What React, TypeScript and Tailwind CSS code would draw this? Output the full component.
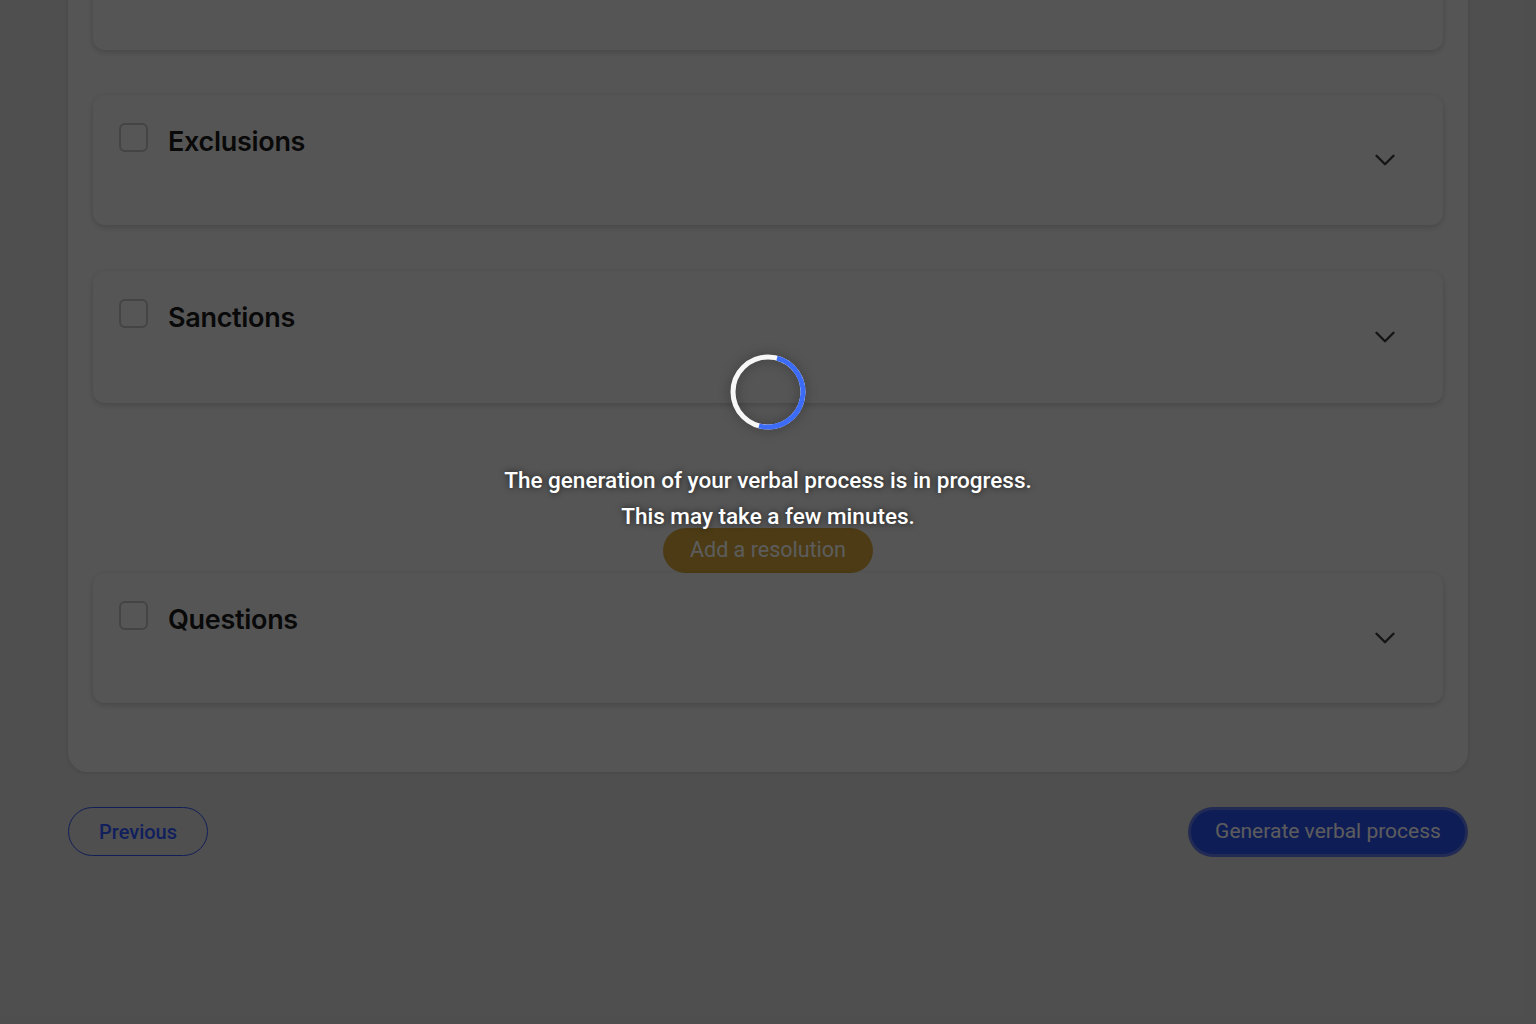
import { ChevronDown } from "lucide-react";

const SECTIONS_TOP = ["Exclusions", "Sanctions"];

function SectionCard({ title, tall }: { title?: string; tall?: boolean }) {
  return (
    <div
      className={`relative flex items-center justify-between rounded-xl bg-[#ececec] px-[26px] shadow-[0_2px_6px_rgba(0,0,0,0.18)] ${
        tall ? "h-[132px]" : "h-[130px]"
      }`}
    >
      {title && (
        <>
          <div className="flex items-start gap-5 self-start pt-7">
            <span className="block h-[29px] w-[29px] rounded-md border-2 border-[#bcbcbc] bg-[#efefef]" />
            <span className="mt-[3px] font-['Inter',sans-serif] text-[27px] font-semibold leading-[32px] tracking-[-0.3px] text-[#1a1a1a]">
              {title}
            </span>
          </div>
          <ChevronDown className="mr-[15px] h-[34px] w-[34px] text-[#3a3a3a]" strokeWidth={1.7} />
        </>
      )}
    </div>
  );
}

function Spinner() {
  // two half arcs: blue on the right, white on the left
  const r = 35;
  return (
    <svg width="84" height="84" viewBox="0 0 84 84" className="drop-shadow-[0_0_6px_rgba(0,0,0,0.35)]">
      <circle cx="42" cy="42" r={r} fill="none" stroke="#f7f7f7" strokeWidth="5" />
      <path
        d={`M ${42 + r * Math.sin(0.26)} ${42 - r * Math.cos(0.26)} A ${r} ${r} 0 0 1 ${42 + r * Math.sin(0.26 + Math.PI)} ${42 - r * Math.cos(0.26 + Math.PI)}`}
        fill="none"
        stroke="#3c6cf5"
        strokeWidth="5"
      />
    </svg>
  );
}

export default function App() {
  return (
    <div className="relative min-h-screen overflow-hidden bg-[#dadada] font-['Roboto',sans-serif]">
      <div className="px-[68px]">
        {/* Main panel, scrolled so its top is above the fold */}
        <div className="-mt-[105px] rounded-[20px] bg-[#ececec] px-[25px] pb-[69px] pt-[25px] shadow-[0_1px_4px_rgba(0,0,0,0.12)]">
          <div className="flex flex-col">
            <SectionCard />
            <div className="mt-[45px]">
              <SectionCard title={SECTIONS_TOP[0]} />
            </div>
            <div className="mt-[46px]">
              <SectionCard title={SECTIONS_TOP[1]} tall />
            </div>
            <div className="mt-[125px] flex justify-center">
              <button className="h-[45px] w-[210px] rounded-full bg-[#d2a43a] text-[21.5px] text-white">
                Add a resolution
              </button>
            </div>
            <SectionCard title="Questions" />
          </div>
        </div>

        {/* Footer actions */}
        <div className="mt-[35px] flex items-center justify-between">
          <button className="h-[49px] w-[140px] rounded-full border-[1.5px] border-[#2c55f0] text-[20px] font-medium text-[#2f58ff]">
            Previous
          </button>
          <button className="mr-[3px] h-[44px] w-[274px] rounded-full bg-[#2a50f0] text-[21px] text-white ring-[3px] ring-[#5b78e6]">
            Generate verbal process
          </button>
        </div>
      </div>

      {/* Loading overlay */}
      <div className="absolute inset-0 flex flex-col items-center bg-black/[0.64] pt-[350px]">
        <Spinner />
        <div className="mt-[28px] text-center text-[22.5px] font-medium leading-[36px] text-white [text-shadow:0_0_6px_rgba(0,0,0,0.7)]">
          <p>The generation of your verbal process is in progress.</p>
          <p>This may take a few minutes.</p>
        </div>
      </div>
    </div>
  );
}
